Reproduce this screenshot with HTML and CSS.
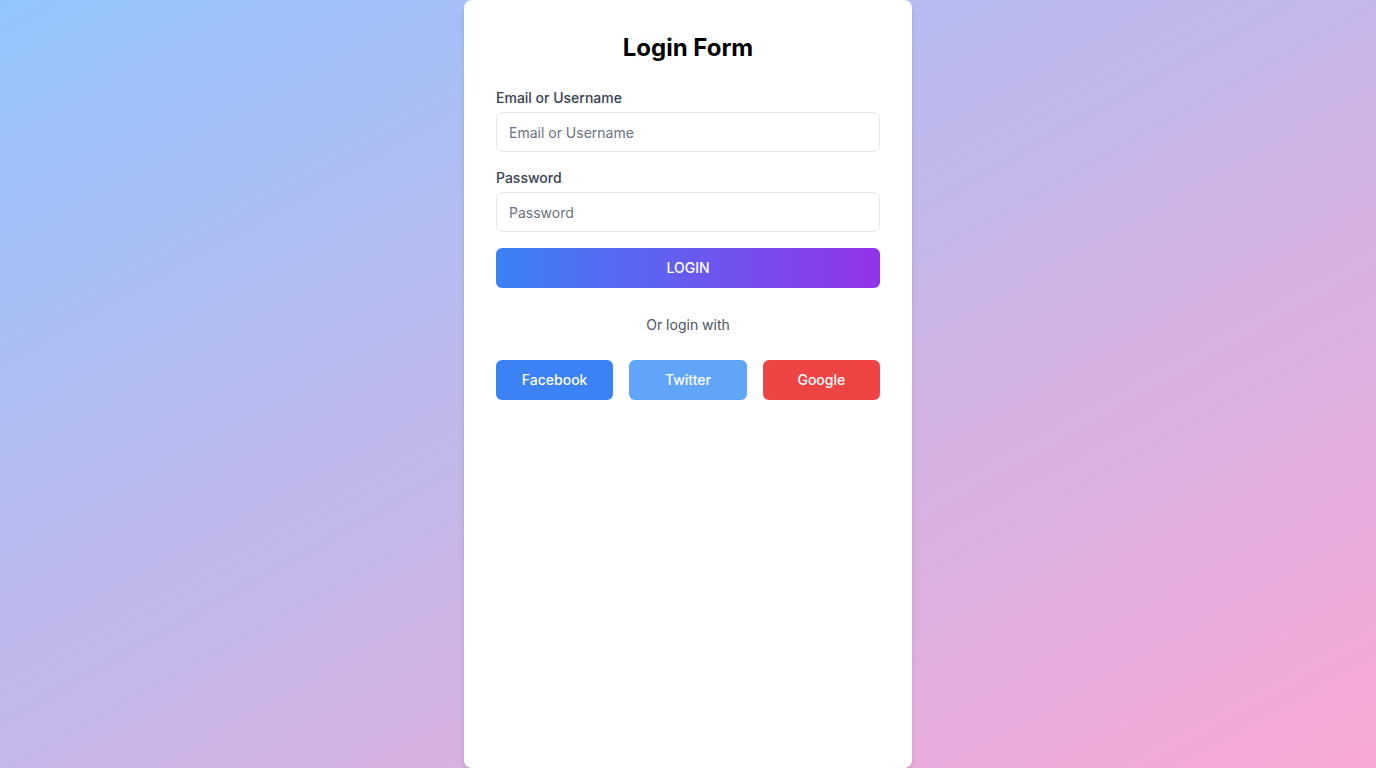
FILE: index.html
```html
<!DOCTYPE html>
<html lang="en">
<head>
<meta charset="utf-8">
<title>Login Form</title>
<link rel="stylesheet" href="styles.css">
</head>
<body>
<main class="page">
  <div class="card">
    <h1 class="title">Login Form</h1>
    <form class="form">
      <div class="field">
        <label class="label" for="user">Email or Username</label>
        <input class="input" id="user" type="text" placeholder="Email or Username">
      </div>
      <div class="field">
        <label class="label" for="pass">Password</label>
        <input class="input" id="pass" type="password" placeholder="Password">
      </div>
      <button class="login" type="button">LOGIN</button>
    </form>
    <p class="or">Or login with</p>
    <div class="socials">
      <button class="social facebook" type="button">Facebook</button>
      <button class="social twitter" type="button">Twitter</button>
      <button class="social google" type="button">Google</button>
    </div>
  </div>
</main>
</body>
</html>
```

FILE: styles.css
```css
* { box-sizing: border-box; }
html, body { margin: 0; padding: 0; height: 100%; }
body {
  font-family: Inter, "Liberation Sans", sans-serif;
  background: linear-gradient(to bottom right, #93c5fd, #f9a8d4);
  min-height: 768px;
}
.page {
  display: flex;
  justify-content: center;
  height: 768px;
}
.card {
  width: 448px;
  height: 768px;
  background: #ffffff;
  border-radius: 8px;
  box-shadow: 0 4px 6px -1px rgba(0,0,0,0.1), 0 2px 4px -2px rgba(0,0,0,0.1);
  padding: 32px;
}
.title {
  margin: 0 0 24px;
  font-size: 24px;
  line-height: 32px;
  font-weight: 700;
  text-align: center;
  color: #000;
}
.form { display: flex; flex-direction: column; margin: 0; }
.field { display: flex; flex-direction: column; margin-bottom: 16px; }
.label {
  font-size: 14px;
  line-height: 20px;
  font-weight: 500;
  color: #374151;
  margin-bottom: 4px;
}
.input {
  height: 40px;
  border: 1px solid #e5e7eb;
  border-radius: 6px;
  padding: 0 12px;
  font-family: inherit;
  font-size: 14px;
  color: #111827;
  outline: none;
}
.input::placeholder { color: #6b7280; }
.login {
  display: flex;
  align-items: center;
  justify-content: center;
  height: 40px;
  padding: 0 0 1px;
  border: none;
  border-radius: 6px;
  background: linear-gradient(to right, #3b82f6, #9333ea);
  color: #fff;
  font-family: inherit;
  font-size: 14px;
  line-height: 20px;
  font-weight: 500;
  cursor: pointer;
}
.or {
  margin: 27px 0 25px;
  text-align: center;
  font-size: 14px;
  line-height: 20px;
  color: #4b5563;
}
.socials {
  display: grid;
  grid-template-columns: repeat(3, 1fr);
  gap: 16px;
}
.social {
  display: flex;
  align-items: center;
  justify-content: center;
  height: 40px;
  padding: 0 0 1px;
  border: none;
  border-radius: 6px;
  color: #fff;
  font-family: inherit;
  font-size: 14px;
  line-height: 20px;
  font-weight: 500;
  cursor: pointer;
}
.facebook { background: #3b82f6; }
.twitter { background: #60a5fa; }
.google { background: #ef4444; }
```
